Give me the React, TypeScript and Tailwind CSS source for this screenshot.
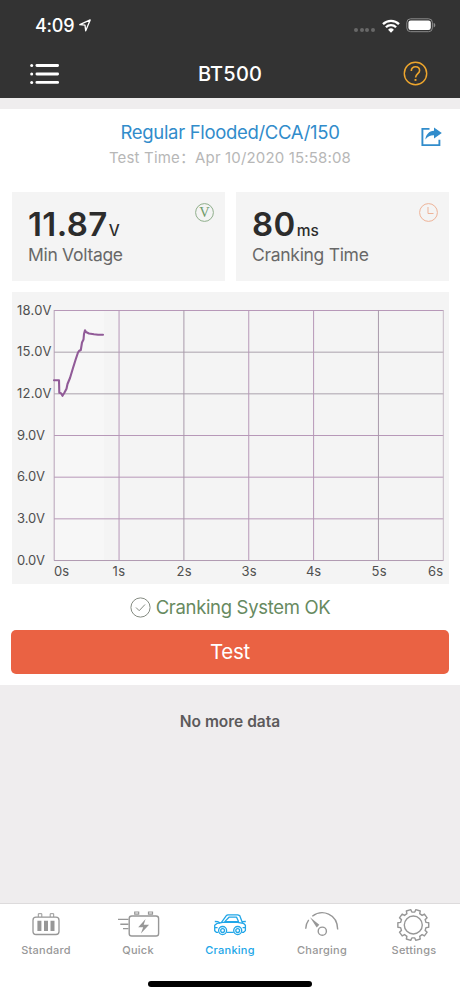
import React from 'react';
import clsx from 'clsx';

const MenuIcon = () => (
  <svg width="30" height="22" viewBox="0 0 30 22" fill="#fff">
    {[2.5, 11, 19.4].map((y) => (
      <g key={y}>
        <circle cx="1.7" cy={y} r="1.5" />
        <rect x="5.5" y={y - 1.4} width="23.5" height="2.8" rx="1.3" />
      </g>
    ))}
  </svg>
);

const WifiIcon = () => (
  <svg width="18" height="14" viewBox="0 0 18 14" fill="none" stroke="#fff" strokeWidth="2.3">
    <path d="M1 5.1a11.4 11.4 0 0 1 16 0" />
    <path d="M3.9 8.2a7.2 7.2 0 0 1 10.2 0" />
    <path d="M9 13.7 6.1 10.7a4.1 4.1 0 0 1 5.8 0z" fill="#fff" stroke="none" />
  </svg>
);

const BatteryIcon = () => (
  <svg width="30" height="15" viewBox="0 0 30 15">
    <rect x="0.8" y="0.8" width="25.6" height="12.9" rx="3.8" fill="none" stroke="#8b8b8b" />
    <rect x="2.4" y="2.4" width="22.4" height="9.7" rx="2.3" fill="#fff" />
    <path d="M27.7 5v4.4c1.1-.4 1.6-1.2 1.6-2.2s-.5-1.8-1.6-2.2z" fill="#8b8b8b" />
  </svg>
);

const ShareIcon = () => (
  <svg width="21" height="20" viewBox="0 0 21 20" fill="none" stroke="#318ccb" strokeWidth="1.9">
    <path d="M8.5 1.9H1.4v16.2h17v-5.3" />
    <path d="M13 .6 20.8 6 13 11.6V8.3C9.5 8.2 6.8 9.2 4.4 12.5 4.8 7.5 8 4 13 3.7z" fill="#318ccb" stroke="none" />
  </svg>
);

const VoltIcon = () => (
  <svg width="20" height="20" viewBox="0 0 20 20">
    <circle cx="9.5" cy="10.5" r="8.9" fill="none" stroke="#8fae8b" />
    <text x="9.5" y="15.3" textAnchor="middle" className="font-['Liberation_Serif',serif] text-[14.5px]" fill="#6f9b6b">V</text>
  </svg>
);

const ClockIcon = () => (
  <svg width="20" height="20" viewBox="0 0 20 20" fill="none" stroke="#eeb398">
    <circle cx="9.5" cy="10.5" r="8.9" />
    <path d="M9 5v6.500h5.500" />
  </svg>
);

const StandardIcon = () => (
  <svg width="36" height="36" viewBox="0 2 36 36" fill="none" stroke="#979797">
    <rect x="5" y="12.2" width="26" height="17.3" rx="3" strokeWidth="1.3" />
    <path d="M10.3 12V8.700h3.500V12M22.200 12V8.700h3.500V12" />
    <path d="M11.4 15.700v10.400M18 15.700v10.400M24.500 15.700v10.400" strokeWidth="4" />
  </svg>
);

const QuickIcon = () => (
  <svg width="44" height="36" viewBox="0 2 44 36" fill="none" stroke="#979797">
    <rect x="13.2" y="11" width="29.4" height="20" rx="2.6" strokeWidth="1.4" />
    <path d="M18.700 9.200V7h4v2.200zM32.500 9.200V7h4v2.200z" strokeWidth="1.2" />
    <path d="M2 14.400h10.500M4.300 19.200h8.200M7 23.600h5.500" strokeWidth="1.4" />
    <path d="m29.600 14-7.400 8.300h5l-2.300 6.200 8.200-8.700h-5.400z" fill="#979797" stroke="none" />
  </svg>
);

const CrankingIcon = () => (
  <svg width="36" height="36" viewBox="0 2.5 36 36" fill="none" stroke="#21a6e8" strokeWidth="1.3" strokeLinejoin="round">
    <path d="M6.200 27.800H4.300l-1.600-1.600v-5.400l2.600-2 5.500-.9h14.600l6 .9 2 2v5.300l-1.800 1.700h-1.700M14.600 27.800h7.100" />
    <path d="m9.300 18.200 5.200-7.300 1.500-.6h9.700l2 .8 2.800 7.400M2.800 17l3.200.2 2.200 1.400M33.800 17l-3.400.2" />
    <path d="m12.800 17.100 4.200-4.400h7.600l1.900 4.400z" />
    <circle cx="10.6" cy="26" r="4" />
    <circle cx="10.6" cy="26" r="1.9" />
    <circle cx="25.7" cy="26" r="4" />
    <circle cx="25.7" cy="26" r="1.9" />
    <path d="M3 23.200h2.600M33 23.200h-2.400" />
  </svg>
);

const ChargingIcon = () => (
  <svg width="36" height="36" viewBox="0.5 2 36 36" fill="none" stroke="#979797" strokeWidth="1.4">
    <path d="M2.200 23.800c.1-3.400 1-6.300 3-9M8.800 11.200C18.500 3.800 34 8.500 34.200 24.500" />
    <circle cx="18.8" cy="26.2" r="4.1" />
    <path d="m6.500 12.300 9.300 7.500-2.600 2.800z" fill="#979797" stroke="none" />
  </svg>
);

const TEETH = 10;

// Flat-topped teeth with shallow gaps between them
const gearPath = () => {
  const step = 360 / TEETH;
  const points: string[] = [];
  for (let i = 0; i < TEETH; i++) {
    const base = i * step - 90 + step / 2;
    [[-11.5, 13], [-8.5, 15.6], [8.5, 15.6], [11.5, 13]].forEach(([offset, r]) => {
      const a = ((base + offset) * Math.PI) / 180;
      points.push(`${(17.3 + r * Math.cos(a)).toFixed(2)} ${(18 + r * Math.sin(a)).toFixed(2)}`);
    });
  }
  return `M${points.join('L')}Z`;
};

const SettingsIcon = () => (
  <svg width="36" height="36" viewBox="0 0 36 36" fill="none" stroke="#979797" strokeWidth="1.4" strokeLinejoin="round">
    <path d={gearPath()} />
    <circle cx="17.3" cy="18" r="9" />
  </svg>
);

const yLabels = ['18.0V', '15.0V', '12.0V', '9.0V', '6.0V', '3.0V', '0.0V'];
const xLabels = ['0s', '1s', '2s', '3s', '4s', '5s', '6s'];
const labelX = [42, 100.5, 164.5, 229.5, 294, 359.5, 416];
const rowColors = ['#b798b8', '#aaa2ac', '#aaa2ac', '#b798b8', '#b798b8', '#b798b8', '#b09ab1'];
const columnColors = ['#b7a3b9', '#b798b8', '#a899aa', '#b798b8', '#b798b8', '#a899aa', '#c6bac6'];

const VoltageChart = () => (
  <svg
    width="437"
    height="292"
    viewBox="0 0 437 292"
    className="block font-['Inter',sans-serif] text-[13px]"
    fill="#4f4f4f"
  >
    <rect x="42" y="18" width="50" height="250" fill="#f7f7f7" />
    {yLabels.map((label, i) => (
      <g key={label}>
        <path d={`M42 ${18.5 + i * 41.67}H431.5`} stroke={rowColors[i]} />
        <text x="5" y={22.5 + i * 41.67} textLength={i < 3 ? 34.5 : 28}>{label}</text>
      </g>
    ))}
    {xLabels.map((label, i) => (
      <g key={label}>
        <path d={`M${42.2 + i * 64.85} 18V268.5`} stroke={columnColors[i]} />
        <text x={labelX[i]} y="284" textLength={i === 1 ? 12.5 : 15}>{label}</text>
      </g>
    ))}
    <path
      d="M42 88.300H47L47.300 100.800 49 101.300 50.500 103.800 52.500 100.500 54.500 96.800 55.500 92 58 86 61 76 63.500 68 66 60.500 67 59 68.800 58 70 50.500 71.500 47.500 72 42 73 38.300 74 40 77 41.500 82 42.300 86 42.800 91 42.700"
      fill="none"
      stroke="#915b98"
      strokeWidth="2.1"
      strokeLinejoin="round"
      strokeLinecap="round"
    />
  </svg>
);

interface StatCardProps {
  value: string;
  unit: string;
  label: string;
  icon: React.ReactNode;
}

const StatCard: React.FC<StatCardProps> = ({ value, unit, label, icon }) => (
  <div className="flex h-[89px] flex-1 justify-between bg-[#f4f4f4] pt-2.5 pr-2.5 pl-4">
    <div>
      <div className="flex items-baseline pt-px whitespace-nowrap text-[#2c2c2c]">
        <span className="text-[33px] leading-[42px] font-semibold tracking-[0.4px]">{value}</span>
        <span className="ml-px text-[15.5px] font-medium">{unit}</span>
      </div>
      <div className="text-[17.5px] leading-5 tracking-[-0.3px] text-[#686868]">{label}</div>
    </div>
    {icon}
  </div>
);

const tabs = [
  { label: 'Standard', icon: StandardIcon },
  { label: 'Quick', icon: QuickIcon },
  { label: 'Cranking', icon: CrankingIcon, active: true },
  { label: 'Charging', icon: ChargingIcon },
  { label: 'Settings', icon: SettingsIcon },
];

const App: React.FC = () => {
  return (
    <div className="flex h-[996px] w-[460px] flex-col overflow-hidden bg-[#efedee] font-['Inter','Noto_Sans_CJK_SC',sans-serif]">
      {/* Status bar + title */}
      <header className="h-[98px] shrink-0 bg-[#333333] text-white">
        <div className="flex h-[49px] items-center justify-between pt-[2px] pr-6 pl-[35px]">
          <div className="flex items-center gap-[5px]">
            <span className="text-[18px] font-medium tracking-[-0.2px]">4:09</span>
            <svg width="12" height="13" viewBox="0 0 12 13" fill="none" stroke="#fff" strokeWidth="1.3" strokeLinejoin="round">
              <path d="M.8 5.700 11.200.9 6.700 11.800 6 6.200z" />
            </svg>
          </div>
          <div className="flex items-center">
            <div className="mt-2 mr-[7px] flex gap-[1.7px]">
              {[0, 1, 2, 3].map((i) => (
                <span key={i} className="size-[4px] rounded-full bg-[#686868]" />
              ))}
            </div>
            <WifiIcon />
            <span className="ml-[6px]"><BatteryIcon /></span>
          </div>
        </div>
        <div className="flex h-[49px] items-center justify-between pr-8 pl-[30px]">
          <MenuIcon />
          <h1 className="-ml-[3px] text-[20px] font-medium tracking-[0.2px]">BT500</h1>
          <svg width="25" height="25" viewBox="0 0 25 25" fill="none" stroke="#eea62d" strokeWidth="1.4">
            <circle cx="12.5" cy="12.5" r="11.2" />
            <path d="M8.300 9.900c0-2.600 1.700-4.200 4.200-4.200s4.100 1.500 4.100 3.700c0 3.200-4 3.300-4 7.200" strokeWidth="1.6" />
            <path d="M12.500 18v1.900" strokeWidth="1.9" />
          </svg>
        </div>
      </header>

      <main className="mt-[11px] h-[576px] shrink-0 bg-white px-[12px]">
        <div className="relative h-[83px] pt-[11px] text-center">
          <h2 className="text-[18.5px] leading-6 tracking-[-0.32px] text-[#318ccb]">Regular Flooded/CCA/150</h2>
          <p className="mt-[3px] text-[15px] leading-[22px] tracking-[0.16px] text-[#b7b7b7]">Test Time：Apr 10/2020 15:58:08</p>
          <span className="absolute top-[18px] right-[6px]"><ShareIcon /></span>
        </div>

        <div className="-mr-px flex gap-[11px]">
          <StatCard value="11.87" unit="V" label="Min Voltage" icon={<VoltIcon />} />
          <StatCard value="80" unit="ms" label="Cranking Time" icon={<ClockIcon />} />
        </div>

        <div className="mt-[11px] -mr-px w-[437px] bg-[#f4f4f4]">
          <VoltageChart />
        </div>

        <div className="flex h-[46px] items-center justify-center gap-[5px] text-[18.5px] tracking-[-0.33px] text-[#678a5f]">
          <svg width="21" height="21" viewBox="0 0 21 21" fill="none" stroke="#858b82" strokeWidth="1">
            <circle cx="10.5" cy="10.5" r="9.6" />
            <path d="m6 10.500 3.200 3.200 5.800-6.200" />
          </svg>
          <span className="pt-px">Cranking System OK</span>
        </div>

        <button className="-ml-px block h-[44px] w-[438px] rounded-[5px] bg-[#ea6243] pt-px text-[20.5px] tracking-[-0.3px] text-white">
          Test
        </button>
      </main>

      <p className="flex-1 pt-[25px] text-center text-[15.5px] leading-6 font-semibold text-[#5c5a5b]">No more data</p>

      {/* Tab bar */}
      <footer className="h-[93px] shrink-0 border-t border-[#dddbdc] bg-white">
        <nav className="grid h-[74px] grid-cols-5">
          {tabs.map(({ label, icon: Icon, active }) => (
            <div
              key={label}
              className={clsx('flex flex-col items-center pt-[3px]', active ? 'text-[#21a6e8]' : 'text-[#989898]')}
            >
              <Icon />
              <span className="text-[11px] leading-[14px] font-medium tracking-[0.25px]">{label}</span>
            </div>
          ))}
        </nav>
        <div className="mx-auto mt-[3px] h-[6px] w-[164px] rounded-full bg-black" />
      </footer>
    </div>
  );
};

export default App;
